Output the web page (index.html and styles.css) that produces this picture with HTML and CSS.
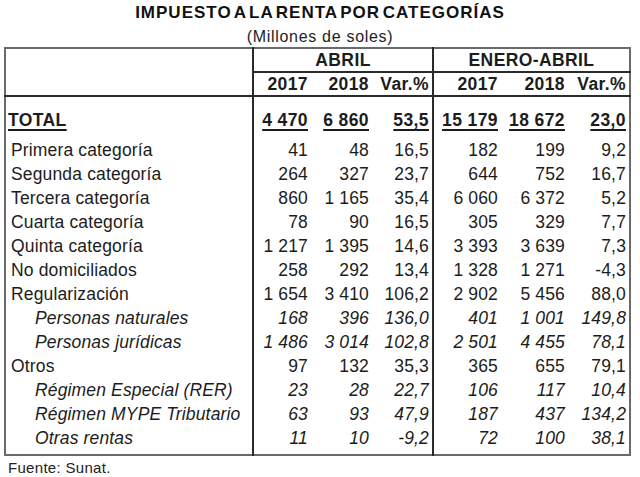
FILE: index.html
```html
<!DOCTYPE html>
<html lang="es">
<head>
<meta charset="utf-8">
<title>Impuesto a la renta por categorías</title>
<link rel="stylesheet" href="styles.css">
</head>
<body>
<div class="page">
  <h1 class="title">IMPUESTO A LA RENTA POR CATEGORÍAS</h1>
  <p class="subtitle">(Millones de soles)</p>
  <table class="tax">
    <colgroup>
      <col class="c-label">
      <col class="c-a1"><col class="c-a2"><col class="c-a3">
      <col class="c-e1"><col class="c-e2"><col class="c-e3">
    </colgroup>
    <thead>
      <tr class="hrow">
        <th rowspan="2" class="blank"></th>
        <th colspan="3" class="group sep">ABRIL</th>
        <th colspan="3" class="group sep">ENERO-ABRIL</th>
      </tr>
      <tr class="hrow">
        <th class="num sep">2017</th><th class="num">2018</th><th class="num">Var.%</th>
        <th class="num sep">2017</th><th class="num">2018</th><th class="num">Var.%</th>
      </tr>
    </thead>
    <tbody>
      <tr class="total">
        <td class="lbl"><u>TOTAL</u></td>
        <td class="num sep"><u>4 470</u></td><td class="num"><u>6 860</u></td><td class="num"><u>53,5</u></td>
        <td class="num sep"><u>15 179</u></td><td class="num"><u>18 672</u></td><td class="num"><u>23,0</u></td>
      </tr>
      <tr><td class="lbl">Primera categoría</td><td class="num sep">41</td><td class="num">48</td><td class="num">16,5</td><td class="num sep">182</td><td class="num">199</td><td class="num">9,2</td></tr>
      <tr><td class="lbl">Segunda categoría</td><td class="num sep">264</td><td class="num">327</td><td class="num">23,7</td><td class="num sep">644</td><td class="num">752</td><td class="num">16,7</td></tr>
      <tr><td class="lbl">Tercera categoría</td><td class="num sep">860</td><td class="num">1 165</td><td class="num">35,4</td><td class="num sep">6 060</td><td class="num">6 372</td><td class="num">5,2</td></tr>
      <tr><td class="lbl">Cuarta categoría</td><td class="num sep">78</td><td class="num">90</td><td class="num">16,5</td><td class="num sep">305</td><td class="num">329</td><td class="num">7,7</td></tr>
      <tr><td class="lbl">Quinta categoría</td><td class="num sep">1 217</td><td class="num">1 395</td><td class="num">14,6</td><td class="num sep">3 393</td><td class="num">3 639</td><td class="num">7,3</td></tr>
      <tr><td class="lbl">No domiciliados</td><td class="num sep">258</td><td class="num">292</td><td class="num">13,4</td><td class="num sep">1 328</td><td class="num">1 271</td><td class="num">-4,3</td></tr>
      <tr><td class="lbl">Regularización</td><td class="num sep">1 654</td><td class="num">3 410</td><td class="num">106,2</td><td class="num sep">2 902</td><td class="num">5 456</td><td class="num">88,0</td></tr>
      <tr class="sub"><td class="lbl">Personas naturales</td><td class="num sep">168</td><td class="num">396</td><td class="num">136,0</td><td class="num sep">401</td><td class="num">1 001</td><td class="num">149,8</td></tr>
      <tr class="sub"><td class="lbl">Personas jurídicas</td><td class="num sep">1 486</td><td class="num">3 014</td><td class="num">102,8</td><td class="num sep">2 501</td><td class="num">4 455</td><td class="num">78,1</td></tr>
      <tr><td class="lbl">Otros</td><td class="num sep">97</td><td class="num">132</td><td class="num">35,3</td><td class="num sep">365</td><td class="num">655</td><td class="num">79,1</td></tr>
      <tr class="sub"><td class="lbl">Régimen Especial (RER)</td><td class="num sep">23</td><td class="num">28</td><td class="num">22,7</td><td class="num sep">106</td><td class="num">117</td><td class="num">10,4</td></tr>
      <tr class="sub"><td class="lbl">Régimen MYPE Tributario</td><td class="num sep">63</td><td class="num">93</td><td class="num">47,9</td><td class="num sep">187</td><td class="num">437</td><td class="num">134,2</td></tr>
      <tr class="sub last"><td class="lbl">Otras rentas</td><td class="num sep">11</td><td class="num">10</td><td class="num">-9,2</td><td class="num sep">72</td><td class="num">100</td><td class="num">38,1</td></tr>
    </tbody>
  </table>
  <p class="source">Fuente: Sunat.</p>
</div>
</body>
</html>
```

FILE: styles.css
```css
html, body {
  margin: 0;
  padding: 0;
  background: #ffffff;
}

body {
  font-family: "Liberation Sans", Arial, sans-serif;
  color: #1c1c1c;
}

.page {
  width: 640px;
  height: 477px;
  overflow: hidden;
  padding-top: 3px;
  box-sizing: border-box;
}

.title {
  margin: 0;
  font-size: 17px;
  line-height: 20px;
  font-weight: bold;
  text-align: center;
  letter-spacing: 1px;
  word-spacing: -3px;
  color: #111;
}

.subtitle {
  margin: 5px 0 0 0;
  font-size: 16px;
  line-height: 18px;
  text-align: center;
  letter-spacing: 0.7px;
  color: #222;
}

.tax {
  margin: 1px 0 0 4px;
  width: 625px;
  border-collapse: collapse;
  table-layout: fixed;
  border: 2px solid #6a6a6a;
  font-size: 17.5px;
  letter-spacing: 0.15px;
}

.c-label { width: 248px; }
.c-a1 { width: 58px; }
.c-a2 { width: 61px; }
.c-a3 { width: 61px; }
.c-e1 { width: 68px; }
.c-e2 { width: 67px; }
.c-e3 { width: 62px; }

.tax th,
.tax td {
  padding: 0;
  white-space: nowrap;
}

.hrow th {
  height: 22px;
  line-height: 22px;
  font-weight: bold;
  font-size: 17.5px;
  letter-spacing: 0.4px;
}

.group {
  text-align: center;
  border-bottom: 2px solid #2a2a2a;
}

.blank {
  border-bottom: 2px solid #2a2a2a;
}

thead tr:nth-child(2) th {
  border-bottom: 2px solid #2a2a2a;
}

.sep {
  border-left: 2px solid #2a2a2a;
}

.num {
  text-align: right;
  padding-right: 3px !important;
}

.tax td {
  height: 24px;
  line-height: 24px;
}

.lbl {
  padding-left: 5px !important;
}

.total td {
  padding-top: 11px;
  padding-bottom: 6px;
  font-weight: bold;
  letter-spacing: 0.4px;
}

.total .lbl {
  padding-left: 2px !important;
}

.total u {
  text-decoration-thickness: 2px;
  text-underline-offset: 3px;
}

.sub td {
  font-style: italic;
}

.sub .lbl {
  padding-left: 29px !important;
}

.last td {
  padding-bottom: 4px;
}

.source {
  margin: 3px 0 0 8px;
  font-size: 15px;
  line-height: 18px;
  letter-spacing: 0.3px;
  color: #222;
}
```
